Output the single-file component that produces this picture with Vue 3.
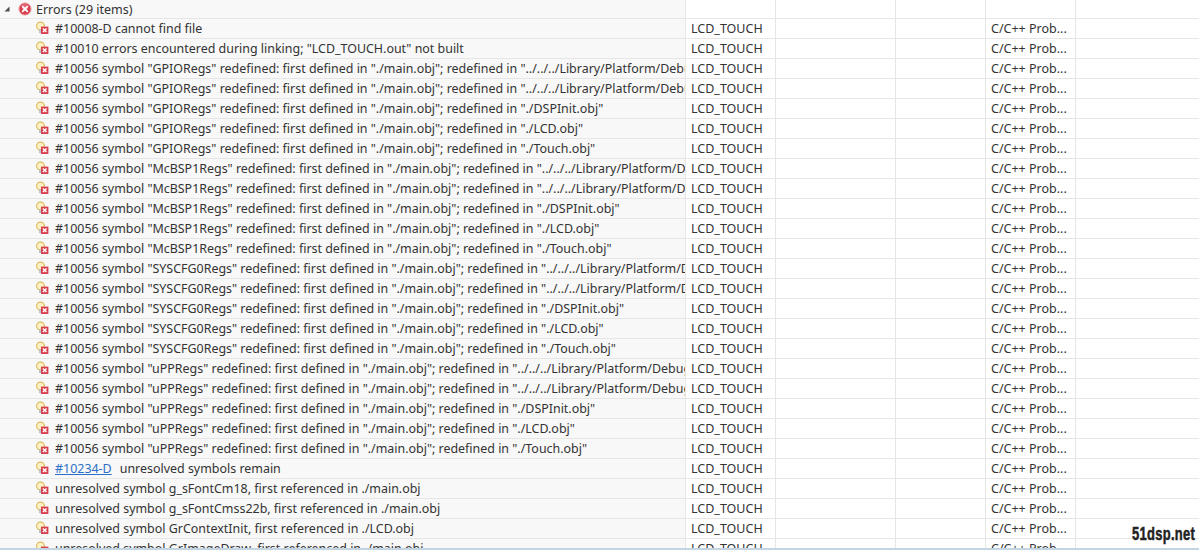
<script setup>
const symbols = ['GPIORegs', 'McBSP1Regs', 'SYSCFG0Regs', 'uPPRegs']
const redefs = ['../../../Library/Platform/Debug/platform.lib', '../../../Library/Platform/Debug/platform.lib', './DSPInit.obj', './LCD.obj', './Touch.obj']
const rows = [
  { text: '#10008-D cannot find file' },
  { text: '#10010 errors encountered during linking; "LCD_TOUCH.out" not built' },
]
symbols.forEach((s) => {
  redefs.forEach((r) => {
    rows.push({ text: `#10056 symbol "${s}" redefined: first defined in "./main.obj"; redefined in "${r}"` })
  })
})
rows.push({ link: '#10234-D', text: 'unresolved symbols remain' })
rows.push({ text: 'unresolved symbol g_sFontCm18, first referenced in ./main.obj' })
rows.push({ text: 'unresolved symbol g_sFontCmss22b, first referenced in ./main.obj' })
rows.push({ text: 'unresolved symbol GrContextInit, first referenced in ./LCD.obj' })
rows.push({ text: 'unresolved symbol GrImageDraw, first referenced in ./main.obj' })
</script>

<template>
  <div class="view">
    <div class="table">
      <div class="row group">
        <div class="cell c1">
          <svg class="twist" width="8" height="8" viewBox="0 0 8 8"><path d="M6.5 1.5V6.5H1.5Z" fill="#4d4d4d" /></svg>
          <svg class="err" width="14" height="14" viewBox="0 0 14 14">
            <circle cx="7" cy="7" r="6" fill="#d9404f" stroke="#e88d95" stroke-width="1" />
            <circle cx="7" cy="5" r="3.4" fill="#ee8a92" opacity="0.5" />
            <path d="M4.7 4.7l4.6 4.6M9.3 4.7l-4.6 4.6" stroke="#fff" stroke-width="1.8" stroke-linecap="round" />
          </svg>
          <span class="txt wide">Errors (29 items)</span>
        </div>
        <div class="cell c2"></div>
        <div class="cell c3"></div>
        <div class="cell c4"></div>
        <div class="cell c5"></div>
        <div class="cell c6"></div>
      </div>
      <div v-for="(r, i) in rows" :key="i" class="row">
        <div class="cell c1 item">
          <svg class="mark" width="16" height="16" viewBox="0 0 16 16">
            <circle cx="5.5" cy="5" r="3.9" fill="#fdf3c4" stroke="#d9b95e" stroke-width="1.1" />
            <path d="M4 8.5h3.2v3.5H4z" fill="#b9c2cc" />
            <rect x="6" y="5.6" width="7.4" height="7.4" fill="#d8404f" />
            <path d="M7.9 7.5l3.6 3.6M11.5 7.5l-3.6 3.6" stroke="#fff" stroke-width="1.4" />
          </svg>
          <a v-if="r.link" class="link">{{ r.link }}</a>
          <span class="txt">{{ r.text }}</span>
        </div>
        <div class="cell c2"><span class="txt wide">LCD_TOUCH</span></div>
        <div class="cell c3"></div>
        <div class="cell c4"></div>
        <div class="cell c5"><span class="txt wide">C/C++ Prob...</span></div>
        <div class="cell c6"></div>
      </div>
    </div>
    <div class="foot"></div>
    <div class="mark-text">51dsp.net</div>
  </div>
</template>

<style scoped>
.view {
  position: relative;
  width: 1199px;
  height: 550px;
  display: flex;
  flex-direction: column;
  overflow: hidden;
  background: #fff;
  font-family: "Noto Sans", "Open Sans", sans-serif;
  font-size: 12.45px;
  color: #333;
}
.table {
  flex: 1;
  min-height: 0;
  overflow: hidden;
}
.row {
  display: flex;
  height: 20px;
  box-sizing: border-box;
  border-bottom: 1px solid #e6e6e6;
}
.group {
  height: 19px;
}
.cell {
  display: flex;
  align-items: center;
  box-sizing: border-box;
  overflow: hidden;
  white-space: nowrap;
  border-right: 1px solid #e6e6e6;
  padding-left: 5px;
}
.c1 {
  width: 686px;
  background: #f8f8f8;
}
.group .c1 {
  padding-left: 3px;
}
.item {
  padding-left: 35px;
}
.c2 { width: 90px; }
.c3 { width: 120px; }
.c4 { width: 90px; }
.c5 { width: 90px; }
.c6 {
  flex: 1;
  border-right: 0;
}
.twist {
  margin-right: 7px;
  flex: none;
}
.err {
  margin-right: 4px;
  flex: none;
}
.mark {
  margin-right: 4px;
  flex: none;
}
.txt {
  flex: none;
}
.wide {
  font-size: 12.5px;
}
.link {
  flex: none;
  color: #2a6fc9;
  text-decoration: underline;
  margin-right: 8px;
}
.foot {
  flex: none;
  height: 2px;
  background: #c3d4e2;
}
.mark-text {
  position: absolute;
  left: 1132px;
  top: 524px;
  font-family: "Liberation Sans", sans-serif;
  font-weight: 700;
  font-size: 18px;
  line-height: 20px;
  letter-spacing: 0.4px;
  color: #222;
  -webkit-text-stroke: 0.5px #222;
  text-shadow: 0 0 2px #fff;
  transform: scaleX(0.72);
  transform-origin: left center;
}
</style>
